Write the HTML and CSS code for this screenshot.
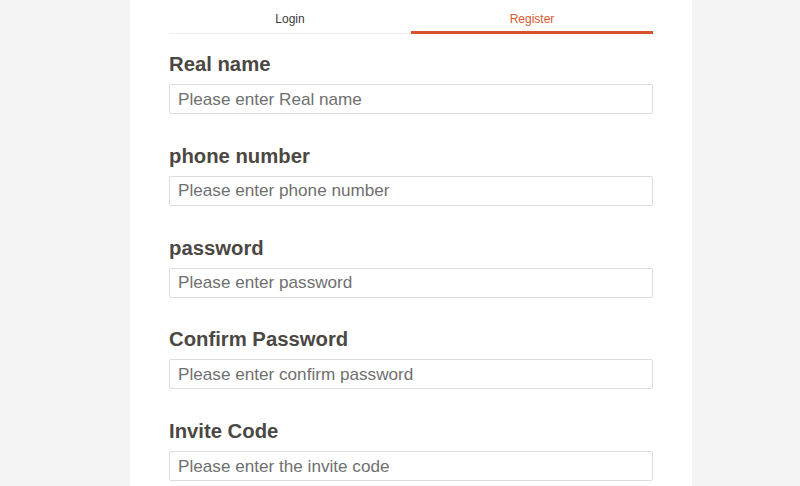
FILE: index.html
```html
<!DOCTYPE html>
<html>
<head>
<meta charset="utf-8">
<link rel="stylesheet" href="styles.css">
</head>
<body>
<div class="page">
  <div class="panel">
    <div class="tabs">
      <div class="tab">Login</div>
      <div class="tab active">Register</div>
    </div>
    <form class="form">
      <div class="field">
        <label class="label">Real name</label>
        <input class="input" type="text" placeholder="Please enter Real name">
      </div>
      <div class="field">
        <label class="label">phone number</label>
        <input class="input" type="text" placeholder="Please enter phone number">
      </div>
      <div class="field">
        <label class="label">password</label>
        <input class="input" type="password" placeholder="Please enter password">
      </div>
      <div class="field">
        <label class="label">Confirm Password</label>
        <input class="input" type="password" placeholder="Please enter confirm password">
      </div>
      <div class="field">
        <label class="label">Invite Code</label>
        <input class="input" type="text" placeholder="Please enter the invite code">
      </div>
    </form>
  </div>
</div>
</body>
</html>
```
FILE: styles.css
```css
html, body {
  margin: 0;
  padding: 0;
  background: #f4f4f4;
  font-family: "Liberation Sans", Arial, sans-serif;
  overflow: hidden;
}
.page {
  display: flex;
  padding-left: 130px;
  height: 486px;
}
.panel {
  width: 484px;
  background: #fff;
  padding: 0 39px;
}
.tabs {
  display: flex;
  border-bottom: 1px solid #ececec;
}
.tab {
  flex: 1;
  text-align: center;
  font-size: 12px;
  line-height: 14px;
  height: 14px;
  padding: 12px 0 5px;
  color: #3a3a3a;
  border-bottom: 3px solid transparent;
  margin-bottom: -1px;
}
.tab.active {
  color: #d9582f;
  border-bottom-color: #d5542b;
}
.form {
  display: flex;
  flex-direction: column;
  gap: 29.75px;
  padding-top: 18px;
}
.field {
  display: flex;
  flex-direction: column;
  gap: 8px;
}
.label {
  font-size: 20.3px;
  line-height: 24px;
  font-weight: bold;
  color: #4b4743;
}
.input {
  box-sizing: border-box;
  height: 30px;
  margin: 0;
  border: 1px solid #dcdcdc;
  border-radius: 2px;
  padding: 0 8px;
  font-family: "Liberation Sans", Arial, sans-serif;
  font-size: 17.15px;
  color: #333;
  outline: none;
  background: #fff;
}
.input::placeholder {
  color: #6f6f6f;
}
```
